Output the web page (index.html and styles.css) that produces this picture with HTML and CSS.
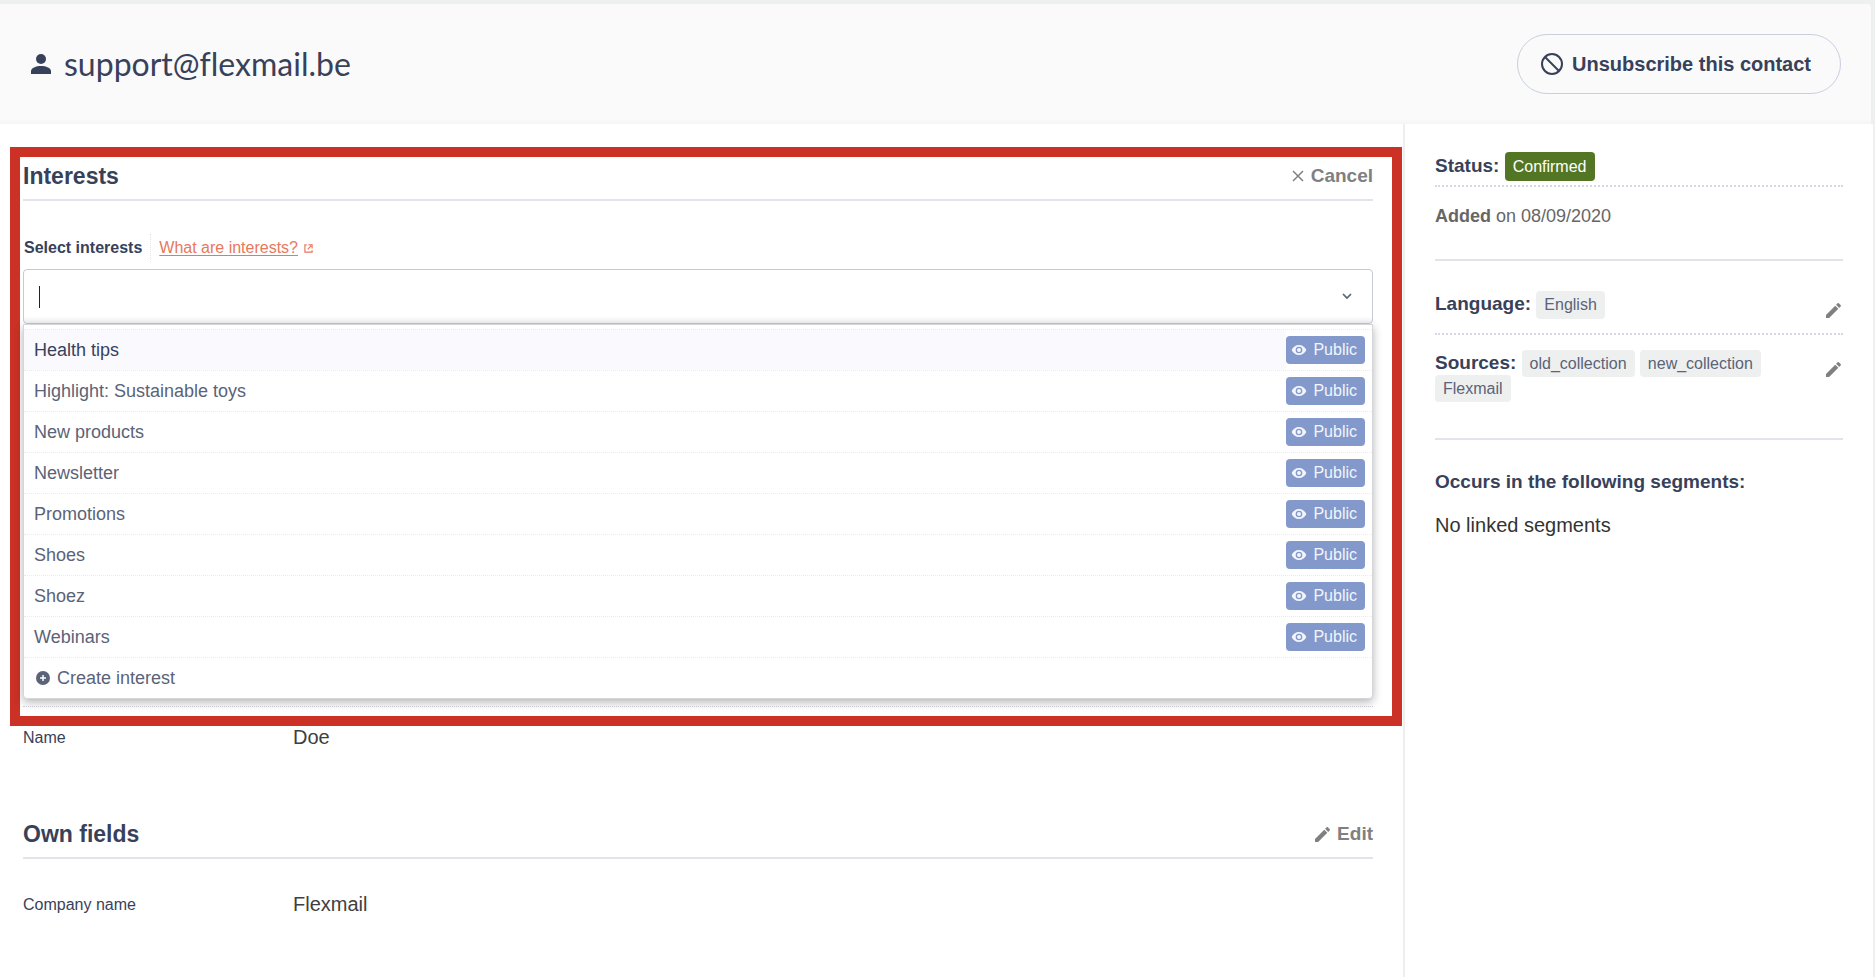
FILE: index.html
```html
<!DOCTYPE html>
<html lang="en">
<head>
<meta charset="utf-8">
<title>support@flexmail.be</title>
<link rel="stylesheet" href="styles.css">
</head>
<body>
<svg class="sprite" aria-hidden="true">
  <symbol id="eye" viewBox="0 0 24 24"><path fill="currentColor" d="M12 4.500C7 4.500 2.730 7.610 1 12c1.730 4.390 6 7.500 11 7.500s9.270-3.110 11-7.500c-1.730-4.390-6-7.500-11-7.500zM12 17a5 5 0 1 1 0-10 5 5 0 0 1 0 10zm0-8a3 3 0 1 0 0 6 3 3 0 0 0 0-6z"/></symbol>
  <symbol id="pencil" viewBox="3 3 18 18"><path fill="currentColor" d="M3 17.250V21h3.750L17.810 9.940l-3.750-3.750L3 17.250zM20.710 7.040a1 1 0 0 0 0-1.410l-2.340-2.340a1 1 0 0 0-1.410 0l-1.830 1.830 3.750 3.750 1.830-1.830z"/></symbol>
</svg>
<div class="page">
  <header class="header">
    <h1 class="title">
      <svg class="person" viewBox="0 0 20 20" aria-hidden="true"><circle cx="10" cy="5" r="5" fill="currentColor"/><path fill="currentColor" d="M0 20v-3c0-3 5-5 10-5s10 2 10 5v3z"/></svg>
      support@flexmail.be
    </h1>
    <button class="unsubscribe" type="button">
      <svg class="ban" viewBox="0 0 22 22" aria-hidden="true"><g fill="none" stroke="currentColor" stroke-width="2"><circle cx="11" cy="11" r="10"/><path d="M4 4l14 14"/></g></svg>
      Unsubscribe this contact
    </button>
  </header>
  <div class="body">
    <main class="main">
      <section>
        <div class="section-head">
          <h2>Interests</h2>
          <button class="action" type="button"><svg class="cross" viewBox="0 0 12 12" aria-hidden="true"><path d="M1 1l10 10M11 1L1 11" fill="none" stroke="currentColor" stroke-width="1.500"/></svg>Cancel</button>
        </div>
        <div class="label-row">
          <label for="interests">Select interests</label>
          <div class="help"><a href="#interests">What are interests?</a>
          <svg class="external" viewBox="0 0 10 10" aria-hidden="true"><path d="M3 1H1v8h8V7M4 6l4-4M5 1h4v4" fill="none" stroke="currentColor" stroke-width="1.300"/></svg></div>
        </div>
        <div class="picker">
          <div class="select">
            <span class="caret"></span>
            <input id="interests" type="text" autocomplete="off">
            <svg class="chevron" viewBox="0 0 10 8" aria-hidden="true"><path d="M1 1l4 4 4-4" fill="none" stroke="currentColor" stroke-width="1.700"/></svg>
          </div>
          <ul class="menu">
            <li class="option active"><span class="name">Health tips</span><span class="badge public"><svg viewBox="0 0 24 24" aria-hidden="true"><use href="#eye"/></svg>Public</span></li>
            <li class="option"><span class="name">Highlight: Sustainable toys</span><span class="badge public"><svg viewBox="0 0 24 24" aria-hidden="true"><use href="#eye"/></svg>Public</span></li>
            <li class="option"><span class="name">New products</span><span class="badge public"><svg viewBox="0 0 24 24" aria-hidden="true"><use href="#eye"/></svg>Public</span></li>
            <li class="option"><span class="name">Newsletter</span><span class="badge public"><svg viewBox="0 0 24 24" aria-hidden="true"><use href="#eye"/></svg>Public</span></li>
            <li class="option"><span class="name">Promotions</span><span class="badge public"><svg viewBox="0 0 24 24" aria-hidden="true"><use href="#eye"/></svg>Public</span></li>
            <li class="option"><span class="name">Shoes</span><span class="badge public"><svg viewBox="0 0 24 24" aria-hidden="true"><use href="#eye"/></svg>Public</span></li>
            <li class="option"><span class="name">Shoez</span><span class="badge public"><svg viewBox="0 0 24 24" aria-hidden="true"><use href="#eye"/></svg>Public</span></li>
            <li class="option"><span class="name">Webinars</span><span class="badge public"><svg viewBox="0 0 24 24" aria-hidden="true"><use href="#eye"/></svg>Public</span></li>
            <li class="option"><button class="create" type="button"><svg viewBox="0 0 14 14" aria-hidden="true"><circle cx="7" cy="7" r="7" fill="currentColor"/><path d="M7 4v6M4 7h6" stroke="#fff" stroke-width="1.500"/></svg>Create interest</button></li>
          </ul>
        </div>
      </section>
      <dl class="field name-field"><dt>Name</dt><dd>Doe</dd></dl>
      <section class="own">
        <div class="section-head">
          <h2>Own fields</h2>
          <button class="action" type="button"><svg class="pencil" aria-hidden="true"><use href="#pencil"/></svg>Edit</button>
        </div>
        <dl class="field"><dt>Company name</dt><dd>Flexmail</dd></dl>
      </section>
      <div class="highlight"></div>
    </main>
    <aside class="side">
      <div class="group">
        <div class="status"><b>Status:</b> <span class="badge confirmed">Confirmed</span></div>
        <p class="added"><b>Added</b> on 08/09/2020</p>
      </div>
      <div class="group meta">
        <div class="item language">
          <div><b>Language:</b> <span class="badge">English</span></div>
          <button class="edit" type="button" aria-label="Edit language"><svg class="pencil" aria-hidden="true"><use href="#pencil"/></svg></button>
        </div>
        <div class="item sources">
          <div><b>Sources:</b> <span class="badge">old_collection</span> <span class="badge">new_collection</span> <span class="badge">Flexmail</span></div>
          <button class="edit" type="button" aria-label="Edit sources"><svg class="pencil" aria-hidden="true"><use href="#pencil"/></svg></button>
        </div>
      </div>
      <h3>Occurs in the following segments:</h3>
      <p class="none">No linked segments</p>
    </aside>
  </div>
</div>
</body>
</html>
```
FILE: styles.css
```css
* { box-sizing: border-box; }
body {
  margin: 0;
  background: #eef0f0;
  color: #38415a;
  font-family: "Liberation Sans", Arial, sans-serif;
  font-size: 19px;
}
h1, h2, h3, p, ul, dl, dd { margin: 0; padding: 0; }
button { border: 0; padding: 0; background: none; color: inherit; font: inherit; cursor: pointer; }
svg { flex: none; }
.sprite { position: absolute; width: 0; height: 0; }
.page { min-height: 100vh; padding: 4px 2px 0 0; display: flex; flex-direction: column; }

.header {
  display: flex;
  align-items: center;
  justify-content: space-between;
  height: 120px;
  margin-right: 2px;
  padding: 0 30px 0 31px;
  background: linear-gradient(#fafafa 115px, #f5f5f5);
  border-radius: 0 4px 0 0;
}
.title {
  display: flex;
  align-items: center;
  gap: 13px;
  font: 400 32px/40px Lato, sans-serif;
  font-variant-ligatures: none;
}
.person { width: 20px; height: 20px; }
.unsubscribe {
  display: flex;
  align-items: center;
  gap: 9px;
  height: 60px;
  padding: 0 29px 0 23px;
  border: 1px solid #c9cfdf;
  border-radius: 30px;
  font-size: 20px;
  font-weight: 700;
}
.ban { width: 22px; height: 22px; }

.body { display: flex; flex: 1; background: #fff; }
.main { position: relative; flex: 1; padding: 36px 30px 0 23px; }
.section-head {
  display: flex;
  align-items: center;
  justify-content: space-between;
  padding-bottom: 7px;
  border-bottom: 2px solid #e3e3e9;
}
h2 { font-size: 23px; line-height: 32px; }
.action { display: flex; align-items: center; gap: 7px; color: #808080; font-weight: 700; }
.cross { width: 12px; height: 12px; }
.pencil { display: block; width: 15px; height: 15px; }

.label-row { display: flex; align-items: center; height: 28px; margin-top: 33px; font-size: 16px; }
.label-row label { padding: 0 8px 0 1px; font-weight: 700; }
.help {
  display: flex;
  align-items: center;
  gap: 6px;
  height: 28px;
  padding-left: 8px;
  border-left: 1px dotted #e4e5ec;
  color: #e8775c;
}
.help a { color: inherit; text-underline-offset: 2px; }
.external { width: 9px; height: 9px; }
.picker { position: relative; margin-top: 7px; }
.select {
  display: flex;
  align-items: center;
  height: 55px;
  padding: 0 20px 0 15px;
  border: 1px solid #c5cad8;
  border-radius: 4px;
  background: linear-gradient(#fff 46px, #f3f3f5);
}
.caret { width: 1px; height: 22px; background: #222; }
.select input { flex: 1; min-width: 0; border: 0; outline: 0; background: none; font: inherit; }
.chevron { width: 10px; height: 8px; color: #5a6378; }
.menu {
  position: absolute;
  z-index: 1;
  top: 100%;
  left: 0;
  right: 0;
  padding-top: 4px;
  border: 1px solid #d5d6da;
  border-radius: 0 0 4px 4px;
  background: #fff;
  box-shadow: 0 3px 10px rgba(0, 0, 0, .3);
  list-style: none;
  font-size: 18px;
  color: #5a6378;
}
.option { display: flex; align-items: center; height: 41px; padding-right: 7px; border-top: 1px dotted #eaebf0; }
.name { display: flex; align-items: center; flex: 1; height: 40px; padding-left: 10px; }
.active .name { background: #f9f9fe; color: #38415a; }
.create { display: flex; align-items: center; gap: 7px; padding-left: 12px; }
.create svg { width: 14px; height: 14px; }

.badge {
  display: inline-block;
  padding: 0 8px;
  border-radius: 4px;
  background: #eef0f0;
  color: #5a6378;
  font-size: 16px;
  line-height: 28px;
}
.public { display: flex; align-items: center; gap: 6px; padding: 0 8px 0 5px; background: #8399cc; color: #f2f5fb; }
.public svg { width: 16px; height: 16px; }
.confirmed { background: #527623; color: #fff; line-height: 29px; }

.field { display: grid; grid-template-columns: 1fr 4fr; line-height: 24px; color: #404040; font-size: 20px; }
.field dt { color: #38415a; font-size: 16px; line-height: 26px; }
.name-field { margin-top: 382px; padding-top: 18px; border-top: 1px dotted #d0d0d6; }
.own { margin-top: 67px; }
.own .field { margin-top: 33px; }
.highlight { position: absolute; top: 23px; left: 10px; right: 1px; height: 579px; border: 10px solid #cb3124; pointer-events: none; }

.side { width: 470px; padding: 28px 30px 0 30px; border-left: 2px solid #eee; }
.group { border-bottom: 2px solid #e3e3e9; }
.status { padding-bottom: 4px; border-bottom: 2px dotted #d6d8e8; }
.added { padding: 18px 0 32px; color: #666; font-size: 18px; line-height: 22px; }
.item { display: flex; justify-content: space-between; }
.language { padding: 30px 0 14px; border-bottom: 2px dotted #d6d8e8; }
.edit { margin: 12px 2px 0 0; color: #808080; align-self: flex-start; }
.sources { padding: 16px 0 37px; line-height: 24px; }
.sources .edit { margin-top: 11px; }
.sources .badge { display: inline; padding: 5px 8px; line-height: 24px; }
h3 { margin-top: 30px; font-size: 19px; line-height: 24px; }
.none { margin-top: 19px; color: #333; font-size: 20px; line-height: 24px; }
```
